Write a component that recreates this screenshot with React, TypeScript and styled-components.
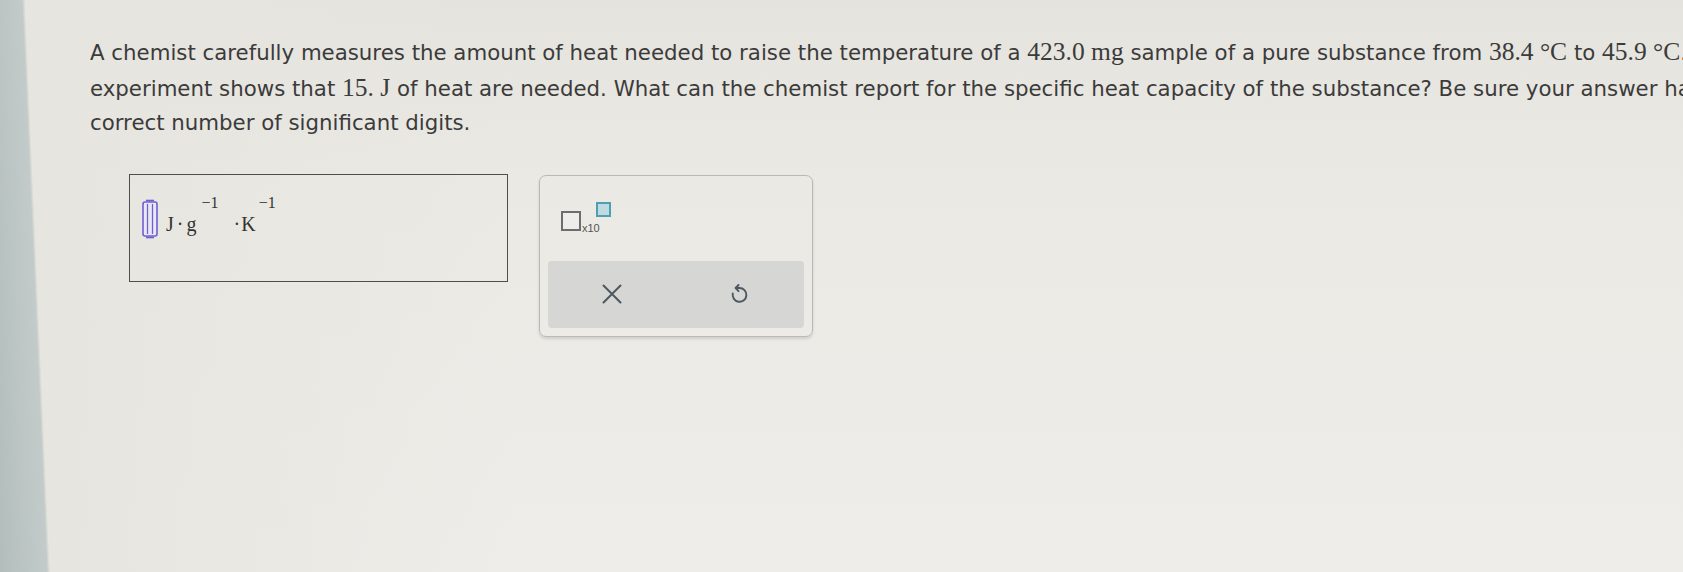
import React from "react";
import styled, { createGlobalStyle } from "styled-components";

const GlobalStyle = createGlobalStyle`
  html, body {
    margin: 0;
    padding: 0;
    overflow: hidden;
  }
`;

const Page = styled.div`
  width: 1683px;
  height: 572px;
  overflow: hidden;
  box-sizing: border-box;
  padding: 35px 0 0 90px;
  background:
    linear-gradient(87.5deg, #b3bebc 0, #c2cbc9 47px, #e7e5df 50px, rgba(233, 231, 225, 0) 520px),
    linear-gradient(180deg, #e5e3dd 0, #ebe9e4 180px, #efede9 572px),
    #ebe9e4;
`;

const Question = styled.p`
  margin: 0;
  font-family: "DejaVu Sans", Verdana, sans-serif;
  font-size: 21.3px;
  line-height: 34.5px;
  color: #3b3b3b;
  white-space: nowrap;
`;

const Math = styled.span`
  font-family: "Liberation Serif", "Times New Roman", serif;
  font-size: 25.5px;
`;

const AnswerRow = styled.div`
  display: flex;
  align-items: flex-start;
  margin-top: 33px;
  margin-left: 39px;
`;

const UnitBox = styled.div`
  box-sizing: border-box;
  width: 379px;
  height: 108px;
  border: 1.5px solid #4e4e4e;
  padding: 24px 0 0 11px;
  display: flex;
  align-items: flex-start;
`;

const Unit = styled.div`
  display: flex;
  align-items: flex-start;
  margin-left: 7px;
  margin-top: 15px;
  font-family: "Liberation Serif", "Times New Roman", serif;
  font-size: 20px;
  line-height: 20px;
  color: #333;
`;

const Dot = styled.span<{ $tight?: boolean }>`
  margin: ${({ $tight }) => ($tight ? "0 1px 0 0" : "0 3px")};
`;

const Sup = styled.span<{ $last?: boolean }>`
  font-size: 16px;
  position: relative;
  top: -21px;
  margin: ${({ $last }) => ($last ? "0 0 0 3px" : "0 15px 0 5px")};
`;

const ToolPanel = styled.div`
  box-sizing: border-box;
  width: 274px;
  height: 162px;
  margin-left: 31px;
  margin-top: 1px;
  border: 1.5px solid #b9b9b7;
  border-radius: 7px;
  padding: 0 8px 8px;
  display: flex;
  flex-direction: column;
  justify-content: space-between;
  box-shadow: 0 2px 3px rgba(0, 0, 0, 0.12);
`;

const Template = styled.div`
  display: flex;
  align-items: flex-start;
  padding: 26px 0 0 13px;
`;

const Slot = styled.div<{ $small?: boolean }>`
  box-sizing: border-box;
  width: ${({ $small }) => ($small ? 15 : 20)}px;
  height: ${({ $small }) => ($small ? 15 : 20)}px;
  border: 2px solid ${({ $small }) => ($small ? "#4f9fb1" : "#6d6d6d")};
  background: ${({ $small }) => ($small ? "#bcdbe3" : "#eeede9")};
  margin-top: ${({ $small }) => ($small ? 0 : 9)}px;
`;

const Times10 = styled.span`
  font-family: "Liberation Sans", Arial, sans-serif;
  font-size: 11px;
  color: #555;
  margin-top: 20px;
  margin-left: 1px;
  margin-right: -4px;
`;

const ButtonBar = styled.div`
  height: 67px;
  background: #d6d6d4;
  border-radius: 4px;
  display: flex;
  align-items: center;
  justify-content: space-between;
  padding: 0 51px 0 50px;
`;

const IconButton = styled.button`
  border: none;
  background: none;
  padding: 0;
  width: 28px;
  height: 28px;
  display: flex;
  align-items: center;
  justify-content: center;
  color: #4e5861;
`;

function CursorMark() {
  return (
    <svg width="18" height="40" viewBox="0 0 18 40">
      <rect x="2" y="3" width="14" height="34" rx="2" fill="#ebe8f5" stroke="#6e60d4" strokeWidth="1.6" />
      <line x1="6.5" y1="5" x2="6.5" y2="35" stroke="#6e60d4" strokeWidth="1.3" />
      <line x1="11.5" y1="5" x2="11.5" y2="35" stroke="#6e60d4" strokeWidth="1.3" />
      <line x1="5" y1="1.5" x2="13" y2="1.5" stroke="#6e60d4" strokeWidth="1.6" />
      <line x1="5" y1="38.5" x2="13" y2="38.5" stroke="#6e60d4" strokeWidth="1.6" />
    </svg>
  );
}

function CloseIcon() {
  return (
    <svg width="20" height="20" viewBox="0 0 20 20">
      <path d="M1.5 1.5 L18.5 18.5 M18.5 1.5 L1.5 18.5" stroke="currentColor" strokeWidth="2" strokeLinecap="round" />
    </svg>
  );
}

function UndoIcon() {
  return (
    <svg width="22" height="26" viewBox="0 0 24 26">
      <path
        d="M8.5 6.5 H12.5 A7.5 7.5 0 1 1 5.2 12.5"
        fill="none"
        stroke="currentColor"
        strokeWidth="2.1"
        strokeLinecap="round"
      />
      <path
        d="M11.5 3.2 L8.3 6.5 L11.5 9.8"
        fill="none"
        stroke="currentColor"
        strokeWidth="2.1"
        strokeLinecap="round"
        strokeLinejoin="round"
      />
    </svg>
  );
}

export default function App() {
  return (
    <>
      <GlobalStyle />
      <Page>
        <Question>
          A chemist carefully measures the amount of heat needed to raise the temperature of a{" "}
          <Math>423.0 mg</Math> sample of a pure substance from <Math>38.4 °C</Math> to{" "}
          <Math>45.9 °C</Math>. The
          <br />
          experiment shows that <Math>15. J</Math> of heat are needed. What can the chemist report
          for the specific heat capacity of the substance? Be sure your answer has the
          <br />
          correct number of significant digits.
        </Question>
        <AnswerRow>
          <UnitBox>
            <CursorMark />
            <Unit>
              J<Dot>·</Dot>g<Sup>−1</Sup>
              <Dot $tight>·</Dot>K<Sup $last>−1</Sup>
            </Unit>
          </UnitBox>
          <ToolPanel>
            <Template>
              <Slot />
              <Times10>x10</Times10>
              <Slot $small />
            </Template>
            <ButtonBar>
              <IconButton aria-label="Clear">
                <CloseIcon />
              </IconButton>
              <IconButton aria-label="Undo">
                <UndoIcon />
              </IconButton>
            </ButtonBar>
          </ToolPanel>
        </AnswerRow>
      </Page>
    </>
  );
}
